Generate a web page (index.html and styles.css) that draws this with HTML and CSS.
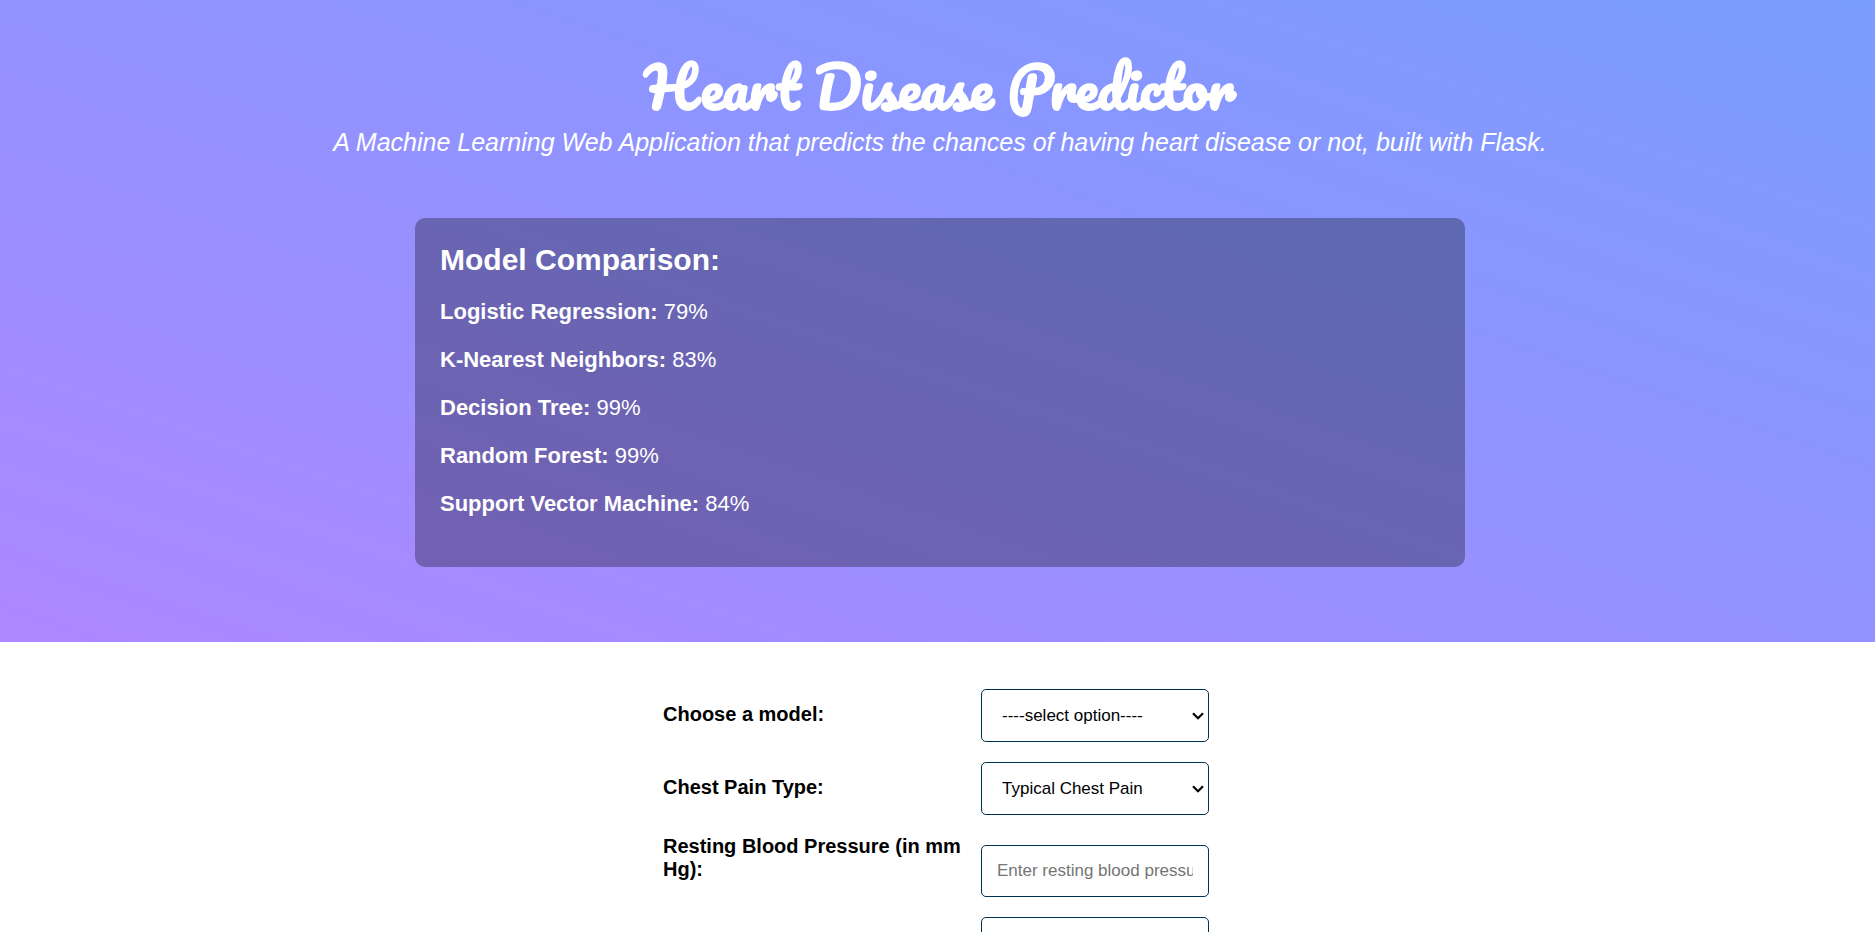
FILE: index.html
```html
<!DOCTYPE html>
<html lang="en">
<head>
<meta charset="utf-8">
<meta name="viewport" content="width=device-width, initial-scale=1">
<title>Heart Disease Predictor</title>
<link rel="stylesheet" href="styles.css">
</head>
<body>
<header class="hero">
  <h1 class="hero-title">Heart Disease Predictor</h1>
  <p class="hero-subtitle">A Machine Learning Web Application that predicts the chances of having heart disease or not, built with Flask.</p>
  <section class="card">
    <h2 class="card-title">Model Comparison:</h2>
    <p class="score"><strong>Logistic Regression:</strong> 79%</p>
    <p class="score"><strong>K-Nearest Neighbors:</strong> 83%</p>
    <p class="score"><strong>Decision Tree:</strong> 99%</p>
    <p class="score"><strong>Random Forest:</strong> 99%</p>
    <p class="score"><strong>Support Vector Machine:</strong> 84%</p>
  </section>
</header>
<main class="content">
  <form class="form">
    <div class="row">
      <label class="label" for="model">Choose a model:</label>
      <div class="select-wrap">
        <select class="field select" id="model"><option>----select option----</option></select>
        <svg class="chevron" width="12" height="8" viewBox="0 0 12 8" aria-hidden="true"><path d="M1 1.2 6 6.2l5-5" fill="none" stroke="#000" stroke-width="2.2"/></svg>
      </div>
    </div>
    <div class="row">
      <label class="label" for="cp">Chest Pain Type:</label>
      <div class="select-wrap">
        <select class="field select" id="cp"><option>Typical Chest Pain</option></select>
        <svg class="chevron" width="12" height="8" viewBox="0 0 12 8" aria-hidden="true"><path d="M1 1.2 6 6.2l5-5" fill="none" stroke="#000" stroke-width="2.2"/></svg>
      </div>
    </div>
    <div class="row">
      <label class="label" for="trestbps">Resting Blood Pressure (in mm Hg):</label>
      <input class="field" id="trestbps" type="text" placeholder="Enter resting blood pressure">
    </div>
    <div class="row">
      <span class="label"></span>
      <input class="field" id="chol" type="text" aria-label="Cholesterol">
    </div>
  </form>
</main>
</body>
</html>
```
FILE: styles.css
```css
* {
  box-sizing: border-box;
}

html {
  height: 100%;
  overflow: hidden;
}

body {
  margin: 0;
  height: 100%;
  overflow: hidden;
  background: #fff;
  color: #000;
  font-family: "Liberation Sans", Arial, sans-serif;
}

.hero {
  display: flex;
  flex-direction: column;
  align-items: center;
  padding: 44px 0 75px 5px;
  background: linear-gradient(to top right, #ad87ff, #799dff);
  color: #fff;
}

.hero-title {
  margin: 0;
  font-family: Pacifico, cursive;
  font-size: 56px;
  font-weight: 700;
  line-height: 84px;
  text-align: center;
}

.hero-subtitle {
  margin: 0 0 62px;
  font-size: 25px;
  font-style: italic;
  line-height: 28px;
  text-align: center;
}

.card {
  width: 1050px;
  max-width: 100%;
  padding: 25px 25px 28px;
  border-radius: 10px;
  background: rgba(0, 0, 0, 0.3);
}

.card-title {
  margin: 0 0 22px;
  font-size: 30px;
  line-height: 34px;
}

.score {
  margin: 0 0 22px;
  font-size: 22px;
  line-height: 26px;
}

.content {
  padding-right: 3px;
}

.form {
  display: flex;
  flex-direction: column;
  gap: 20px;
  width: 546px;
  max-width: 100%;
  margin: 47px auto 0;
}

.row {
  display: flex;
  align-items: last baseline;
  gap: 5px;
}

.label {
  flex: 1;
  font-size: 20px;
  font-weight: 700;
  line-height: 23px;
}

.field {
  width: 228px;
  padding: 15px;
  border: 1px solid #003052;
  border-radius: 5px;
  background: #fff;
  color: #000;
  font-family: inherit;
  font-size: 17px;
}

.select-wrap {
  display: flex;
  position: relative;
}

.select {
  appearance: none;
  padding: 16px 20px;
  line-height: 19px;
}

.chevron {
  position: absolute;
  top: 50%;
  right: 5px;
  margin-top: -4px;
  pointer-events: none;
}
```
